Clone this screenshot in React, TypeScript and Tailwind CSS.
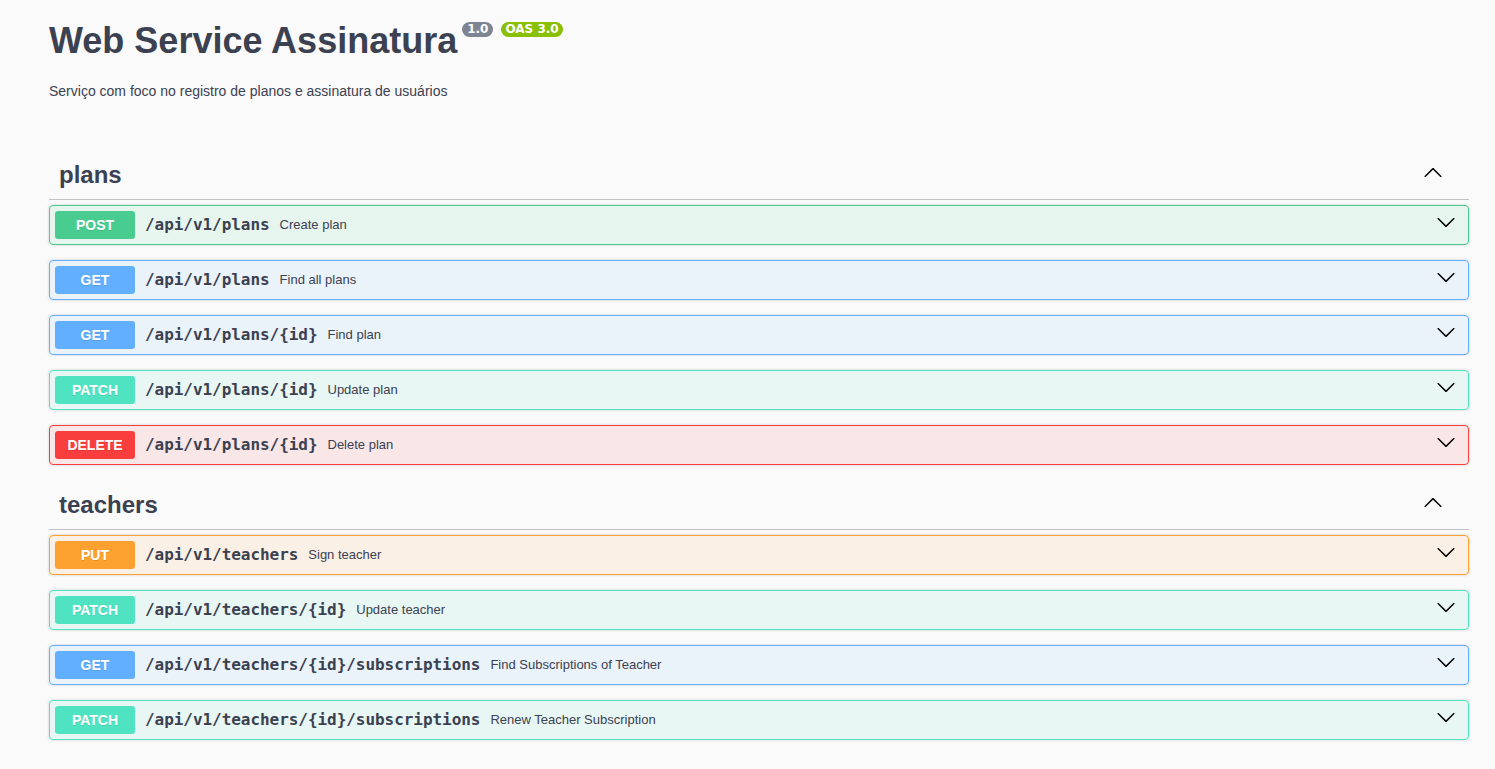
import React from 'react'

type Method = 'POST' | 'GET' | 'PATCH' | 'DELETE' | 'PUT'

const styles: Record<Method, { box: string; badge: string }> = {
  POST: { box: 'border-[#49cc90] bg-[#49cc90]/10', badge: 'bg-[#49cc90]' },
  GET: { box: 'border-[#61affe] bg-[#61affe]/10', badge: 'bg-[#61affe]' },
  PATCH: { box: 'border-[#50e3c2] bg-[#50e3c2]/10', badge: 'bg-[#50e3c2]' },
  DELETE: { box: 'border-[#f93e3e] bg-[#f93e3e]/10', badge: 'bg-[#f93e3e]' },
  PUT: { box: 'border-[#fca130] bg-[#fca130]/10', badge: 'bg-[#fca130]' },
}

const tags: { name: string; ops: [Method, string, string][] }[] = [
  {
    name: 'plans',
    ops: [
      ['POST', '/api/v1/plans', 'Create plan'],
      ['GET', '/api/v1/plans', 'Find all plans'],
      ['GET', '/api/v1/plans/{id}', 'Find plan'],
      ['PATCH', '/api/v1/plans/{id}', 'Update plan'],
      ['DELETE', '/api/v1/plans/{id}', 'Delete plan'],
    ],
  },
  {
    name: 'teachers',
    ops: [
      ['PUT', '/api/v1/teachers', 'Sign teacher'],
      ['PATCH', '/api/v1/teachers/{id}', 'Update teacher'],
      ['GET', '/api/v1/teachers/{id}/subscriptions', 'Find Subscriptions of Teacher'],
      ['PATCH', '/api/v1/teachers/{id}/subscriptions', 'Renew Teacher Subscription'],
    ],
  },
]

function ArrowDown() {
  return (
    <svg width="20" height="20" viewBox="0 0 20 20" className="mb-[6px] fill-black">
      <path d="M17.418 6.109c.272-.268.709-.268.979 0s.271.701 0 .969l-7.908 7.83c-.27.268-.707.268-.979 0l-7.908-7.83c-.27-.268-.27-.701 0-.969.271-.268.709-.268.979 0L10 13.25l7.418-7.141z" />
    </svg>
  )
}

function ArrowUp() {
  return (
    <svg width="20" height="20" viewBox="0 0 20 20" className="mb-[6px] fill-black">
      <path d="M17.418 14.908c.272.268.709.268.979 0s.271-.701 0-.969l-7.908-7.83c-.27-.268-.707-.268-.979 0l-7.908 7.83c-.27.268-.27.701 0 .969.271.268.709.268.979 0L10 7.767l7.418 7.141z" />
    </svg>
  )
}

export default function App() {
  return (
    <div className="min-h-screen bg-[#fafafa] text-[#3b4151] font-['Liberation_Sans',Arial,sans-serif]">
      <div className="pl-[49px] w-[1469px] pb-[30px]">
        <div className="pt-[21px]">
          <h1 className="flex items-start text-[36px] leading-[40px] font-bold">
            <span>Web Service Assinatura</span>
            <span className="ml-[5px] mt-[1px] rounded-full bg-[#7d8492] px-[5px] py-[2px] text-[12px] leading-[11px] font-bold text-white font-['DejaVu_Sans',sans-serif]">
              1.0
            </span>
            <span className="ml-[8px] mt-[1px] rounded-full bg-[#89bf04] px-[4px] py-[2px] text-[12px] leading-[11px] font-bold text-white font-['DejaVu_Sans',sans-serif]">
              OAS 3.0
            </span>
          </h1>
          <p className="mt-[22px] text-[14px] leading-[16px]">
            Serviço com foco no registro de planos e assinatura de usuários
          </p>
        </div>

        <div className="mt-[52px]">
          {tags.map((tag) => (
            <div key={tag.name} className="pb-[1px]">
              <div className="mb-[5px] flex items-center justify-between border-b border-[#3b4151]/30 py-[10px] pl-[10px] pr-[26px]">
                <h3 className="text-[24px] leading-[28px] font-bold">{tag.name}</h3>
                <ArrowUp />
              </div>
              {tag.ops.map(([method, path, desc], i) => (
                <div
                  key={i}
                  className={`mb-[15px] flex items-center rounded-[4px] border p-[5px] shadow-[0_0_3px_rgba(0,0,0,0.19)] ${styles[method].box}`}
                >
                  <span
                    className={`min-w-[80px] rounded-[3px] py-[6px] text-center text-[14px] leading-[16px] font-bold text-white [text-shadow:0_1px_0_rgba(0,0,0,0.1)] ${styles[method].badge}`}
                  >
                    {method}
                  </span>
                  <span className="px-[10px] text-[16px] leading-[16px] font-semibold tracking-[-0.05px] font-['DejaVu_Sans_Mono',monospace]">
                    {path}
                  </span>
                  <span className="flex-1 text-[13px] leading-[16px]">{desc}</span>
                  <span className="mr-[7px] flex items-center">
                    <ArrowDown />
                  </span>
                </div>
              ))}
            </div>
          ))}
        </div>
      </div>
    </div>
  )
}
